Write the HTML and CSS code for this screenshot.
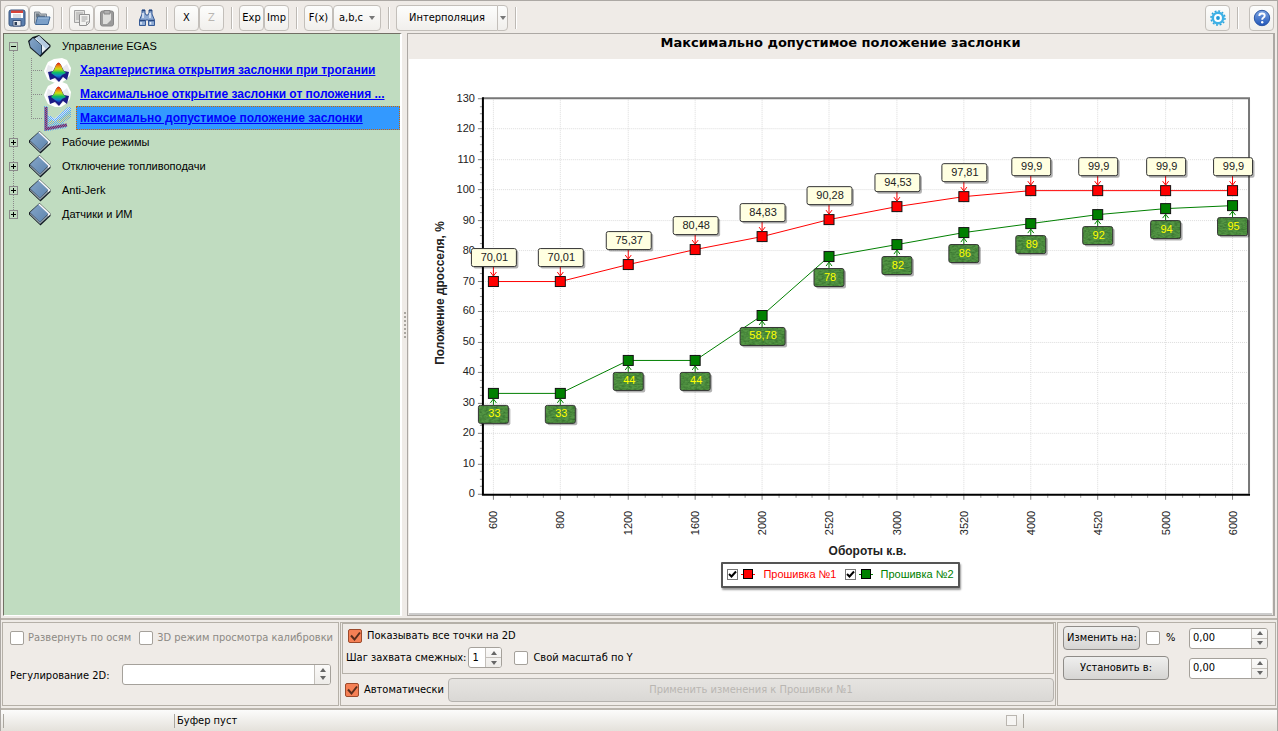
FILE: index.html
```html
<!DOCTYPE html>
<html lang="ru">
<head>
<meta charset="utf-8">
<title>Максимально допустимое положение заслонки</title>
<link rel="stylesheet" href="styles.css">
</head>
<body>
<svg class="defs" width="0" height="0" aria-hidden="true">
  <defs>
    <linearGradient id="cover" x1="0" y1="0" x2="1" y2="1"><stop offset="0" stop-color="#86a6c8"/><stop offset="1" stop-color="#5d84ae"/></linearGradient>
    <linearGradient id="help" x1="0" y1="0" x2="0" y2="1"><stop offset="0" stop-color="#7fa6e4"/><stop offset="1" stop-color="#1f55b8"/></linearGradient>
    <linearGradient id="peak" x1="0" y1="0" x2="0" y2="1"><stop offset="0" stop-color="#d81010"/><stop offset=".22" stop-color="#f09010"/><stop offset=".4" stop-color="#c8e010"/><stop offset=".6" stop-color="#10c060"/><stop offset=".8" stop-color="#1080d0"/><stop offset="1" stop-color="#1818a0"/></linearGradient>
    <pattern id="dither" width="2" height="2" patternUnits="userSpaceOnUse"><path d="M0 0h1v1H0zM1 1h1v1H1z" fill="#3399ff"/></pattern>
    <symbol id="book" viewBox="0 0 24 24">
      <path d="M11.500 1 22.500 11.500V14L12.500 23.500 1 12.500V10.500Z" fill="#101820"/>
      <path d="M2 12.500 12 22 21.500 13.500 20.500 12 12 20 2 11Z" fill="#8c9aa6"/>
      <path d="M11 2 20.500 11.500 12 20 2 10.500Z" fill="url(#cover)"/>
      <path d="M11 2 21.500 12 20 13.500" fill="none" stroke="#fff" stroke-width="1.600"/>
    </symbol>
    <symbol id="openbook" viewBox="0 0 24 24">
      <path d="M0 7 4.500 3 11 1 22.500 11V13L12.500 23 2 14Z" fill="#101820"/>
      <path d="M11 2 21.500 12 13 20 6 5Z" fill="#e8f0f6"/>
      <path d="M11 2 21.500 12 18 15 8 4Z" fill="#b4cbe0"/>
      <path d="M5 4 13 11V20L12 21.500 2.500 13 1.500 7.500Z" fill="url(#cover)"/>
      <path d="M6 4.500 13.500 11V20" fill="none" stroke="#29445f"/>
    </symbol>
    <symbol id="surface" viewBox="0 0 28 26">
      <path d="M10 1 18 0 23 2 25 6 27 10 26 17 23 21 17 25H11L4 22 2 18 0 13 2 8 4 4Z" fill="#fff"/>
      <path d="M4 7 9 9 7 20 2 14ZM23 6 18 10 20 20 26 13ZM8 20l6 4 6-4" fill="#e9e9ef"/>
      <path d="M4 14 9 13 12 7Q14.500 3 17 7L20 13 25 14 23 22 19 19 15 24 11 20 6 22Z" fill="#1b1b86"/>
      <path d="M7 15 10 12 12 7Q14.500 2 17 7L19 12 22 15 18 17 15 21 11 18Z" fill="url(#peak)"/>
    </symbol>
    <symbol id="curve" viewBox="0 0 28 26">
      <path d="M2 1V23L23 19" fill="none" stroke="#a82040" stroke-width="3"/>
      <path d="M5 18 12 13 16 16 26 9" fill="none" stroke="#f0e080" stroke-width="3"/>
      <path d="M5 11 11 14 26 2" fill="none" stroke="#d8e4f4" stroke-width="3"/>
      <path d="M0 0h4v10h3l4 3L24 1h3v10l-8 6 4 1v4L4 25H0Z" fill="url(#dither)" opacity=".75"/>
    </symbol>
  </defs>
</svg>
<div class="window">
  <header class="toolbar">
    <button class="tool" aria-label="Сохранить"><svg width="18" height="18" viewBox="0 0 18 18"><rect x="1" y="1" width="16" height="16" rx="2" fill="#5b7fae" stroke="#3a5680"/><path d="M3 2h12v7H3z" fill="#fff"/><path d="M3 1.500h12v2.500H3z" fill="#d84438"/><path d="M5 6h8M5 8h8" stroke="#b5bcc6"/><path d="M5 11.500h8V17H5z" fill="#e6e9ee" stroke="#38507a"/><path d="M6.500 13h2.500v3H6.500z" fill="#2b3c58"/></svg></button>
    <button class="tool" aria-label="Открыть"><svg width="18" height="18" viewBox="0 0 18 18"><path d="M1.500 14.500V3h5l1 2h6v3" fill="#b9bec4" stroke="#7e8790"/><path d="M3 4.500h3l1 2h5v2H3z" fill="#6c7883"/><path d="M4.500 8H17l-2 7.500H2.500Z" fill="#7ba0c9" stroke="#3f6796"/><path d="M5 9h11" stroke="#a9c3e0"/></svg></button>
    <span class="sep"></span>
    <button class="tool" aria-label="Копировать" disabled><svg width="18" height="18" viewBox="0 0 18 18"><path d="M1.500 1.500h10v12h-10z" fill="#e2e2e0" stroke="#a2a2a2"/><path d="M3 4h7M3 6h3M3 8h3M3 10h3" stroke="#a8a8a8"/><path d="M6.500 5.500h10v8l-3 3h-7z" fill="#f3f3f1" stroke="#909090"/><path d="M8.500 8h6M8.500 10h6M8.500 12h4M13.500 16v-3h3" stroke="#a2a2a2" fill="none"/></svg></button>
    <button class="tool" aria-label="Вставить" disabled><svg width="18" height="18" viewBox="0 0 18 18"><rect x="2.500" y="2" width="13" height="15" rx="2" fill="#9b9b9b" stroke="#888"/><path d="M5 4h8v11H5z" fill="#dededc"/><path d="M6 1.500h6V5H6z" fill="#b0b0b0" stroke="#888"/><path d="M13 11v4H9z" fill="#999"/></svg></button>
    <span class="sep"></span>
    <button class="tool flat" aria-label="Поиск"><svg width="18" height="18" viewBox="0 0 18 18"><path d="M4 1h3v3l1 2h2l1-2V1h3v4l2.500 6v5.500h-6V11H7.500v5.500h-6V11L4 5Z" fill="#8eaad3" stroke="#365a96"/><path d="M4 1.500h3M11 1.500h3M2 11.500h5M11 11.500h5" stroke="#27477f" stroke-width="1.500"/><path d="M3 13v2.500M12.500 13v2.500M5 4v5M12 4v5" stroke="#e4edf9" stroke-width="1.500"/></svg></button>
    <span class="sep"></span>
    <button class="tool">X</button><button class="tool" disabled>Z</button>
    <span class="sep"></span>
    <button class="tool">Exp</button><button class="tool">Imp</button>
    <span class="sep"></span>
    <button class="tool fx">F(x)</button><button class="tool abc">a,b,c<i class="caret"></i></button>
    <span class="sep"></span>
    <span class="split"><button class="tool main">Интерполяция</button><button class="tool drop" aria-label="Выбор интерполяции"><i class="caret"></i></button></span>
    <span class="sep"></span>
    <span class="spring"></span>
    <button class="tool" aria-label="Настройки"><svg width="18" height="18" viewBox="0 0 18 18"><circle cx="9" cy="9" r="7" fill="none" stroke="#2ba3dc" stroke-width="1.500" stroke-dasharray="1.900 1.765"/><circle cx="9" cy="9" r="5.200" fill="#fff" stroke="#3eb1e6" stroke-width="2.500"/><circle cx="9" cy="9" r="1.900" fill="#2098d8"/></svg></button>
    <span class="sep far"></span>
    <button class="tool" aria-label="Справка"><svg width="18" height="18" viewBox="0 0 18 18"><circle cx="9" cy="9" r="7.700" fill="url(#help)" stroke="#2a56a5"/><path d="M6.300 7Q6.300 4.500 9 4.500T11.700 6.800Q11.700 8 10.300 8.800 9.200 9.400 9.200 10.700" fill="none" stroke="#fff" stroke-width="1.900"/><circle cx="9.200" cy="13.200" r="1.200" fill="#fff"/></svg></button>
  </header>

  <main class="work">
    <nav class="tree">
      <ul class="roots">
        <li>
          <div class="row"><button class="toggle" aria-label="Свернуть"><svg width="9" height="9"><path d="M2 4.500h5" stroke="#000"/></svg></button><svg class="icon"><use href="#openbook"/></svg><span>Управление EGAS</span></div>
          <ul class="leaves">
            <li><svg class="pic"><use href="#surface"/></svg><a href="#">Характеристика открытия заслонки при трогании</a></li>
            <li><svg class="pic"><use href="#surface"/></svg><a href="#">Максимальное открытие заслонки от положения ...</a></li>
            <li><svg class="pic"><use href="#curve"/></svg><a href="#" class="selected">Максимально допустимое положение заслонки</a></li>
          </ul>
        </li>
        <li><div class="row"><button class="toggle" aria-label="Развернуть"><svg width="9" height="9"><path d="M2 4.500h5M4.500 2v5" stroke="#000"/></svg></button><svg class="icon"><use href="#book"/></svg><span>Рабочие режимы</span></div></li>
        <li><div class="row"><button class="toggle" aria-label="Развернуть"><svg width="9" height="9"><path d="M2 4.500h5M4.500 2v5" stroke="#000"/></svg></button><svg class="icon"><use href="#book"/></svg><span>Отключение топливоподачи</span></div></li>
        <li><div class="row"><button class="toggle" aria-label="Развернуть"><svg width="9" height="9"><path d="M2 4.500h5M4.500 2v5" stroke="#000"/></svg></button><svg class="icon"><use href="#book"/></svg><span>Anti-Jerk</span></div></li>
        <li><div class="row"><button class="toggle" aria-label="Развернуть"><svg width="9" height="9"><path d="M2 4.500h5M4.500 2v5" stroke="#000"/></svg></button><svg class="icon"><use href="#book"/></svg><span>Датчики и ИМ</span></div></li>
      </ul>
    </nav>
    <div class="splitter"><span></span></div>
    <section class="view">
      <h1>Максимально допустимое положение заслонки</h1>
      <div class="chartbox">
        <svg id="chart" class="chart" viewBox="0 0 864 502" role="img" aria-label="Положение дросселя, %"></svg>
        <div class="legend">
          <label class="first"><input type="checkbox" checked><svg width="14" height="12"><path d="M0 6.500h14" stroke="#f00"/><rect x="2.500" y="1.500" width="9" height="9" fill="#f00" stroke="#000"/></svg>Прошивка №1</label>
          <label class="second"><input type="checkbox" checked><svg width="14" height="12"><path d="M0 6.500h14" stroke="#008000"/><rect x="2.500" y="1.500" width="9" height="9" fill="#008000" stroke="#000"/></svg>Прошивка №2</label>
        </div>
      </div>
    </section>
  </main>

  <section class="controls">
    <div class="panel axes">
      <div class="line">
        <label class="check off"><input type="checkbox" disabled>Развернуть по осям</label>
        <label class="check off"><input type="checkbox" disabled>3D режим просмотра калибровки</label>
      </div>
      <div class="line adjust">
        <label for="adj">Регулирование 2D:</label>
        <span class="spin wide"><input id="adj" type="text"><span class="arrows"><button aria-label="Больше"></button><button aria-label="Меньше"></button></span></span>
      </div>
    </div>
    <div class="panel points">
      <div class="inner">
        <label class="check"><input type="checkbox" checked>Показывать все точки на 2D</label>
        <div class="line">
          <label for="step">Шаг захвата смежных:</label>
          <span class="spin small"><input id="step" type="text" value="1"><span class="arrows"><button aria-label="Больше"></button><button aria-label="Меньше"></button></span></span>
          <label class="check scale"><input type="checkbox">Свой масштаб по Y</label>
        </div>
      </div>
      <div class="line apply">
        <label class="check"><input type="checkbox" checked>Автоматически</label>
        <button class="push" disabled>Применить изменения к Прошивки №1</button>
      </div>
    </div>
    <div class="panel edit">
      <div class="line">
        <button class="push change">Изменить на:</button>
        <label class="check percent"><input type="checkbox">%</label>
        <span class="spin num"><input type="text" value="0,00" aria-label="Изменить на"><span class="arrows"><button aria-label="Больше"></button><button aria-label="Меньше"></button></span></span>
      </div>
      <div class="line">
        <button class="push set">Установить в:</button>
        <span class="spin num"><input type="text" value="0,00" aria-label="Установить в"><span class="arrows"><button aria-label="Больше"></button><button aria-label="Меньше"></button></span></span>
      </div>
    </div>
  </section>

  <footer class="status">
    <span class="cell blank"></span>
    <span class="cell text">Буфер пуст</span>
    <span class="box"></span>
    <span class="cell tail"></span>
  </footer>
</div>
<script src="chart.js"></script>
</body>
</html>
```

FILE: styles.css
```css
* { box-sizing: border-box; }
body {
  margin: 0;
  background: #efebe7;
  color: #000;
  font: 11px/14px "DejaVu Sans Condensed", "DejaVu Sans", sans-serif;
  white-space: nowrap;
}
button, input { font: inherit; color: inherit; }
ul { list-style: none; margin: 0; padding: 0; }
.defs { position: absolute; }

.window {
  display: flex;
  flex-direction: column;
  height: 100vh;
  min-height: 600px;
  border: 1px solid #aca8a4;
  border-bottom: 0;
  padding-top: 1px;
}

/* toolbar */
.toolbar {
  display: flex;
  align-items: center;
  height: 31px;
  padding: 0 3px;
  flex: none;
}
.tool {
  display: flex;
  align-items: center;
  justify-content: center;
  flex: none;
  width: 25px;
  height: 26px;
  padding: 0;
  border: 1px solid #c3bfba;
  border-radius: 4px;
  background: linear-gradient(#fdfdfc, #f1efec);
}
.tool:disabled { color: #b9b6b2; }
.tool.flat { border-color: transparent; background: none; }
.tool.fx { width: 29px; }
.tool.abc { width: 48px; gap: 6px; }
.split { display: flex; }
.split .main { width: 101px; border-radius: 4px 0 0 4px; border-right: 0; }
.split .drop { width: 11px; border-radius: 0 4px 4px 0; }
.caret { border: 3px solid transparent; border-top: 4px solid #777; border-bottom: 0; }
.sep {
  width: 2px;
  height: 22px;
  margin: 0 6px 0 7px;
  border-left: 1px solid #bdb9b4;
  border-right: 1px solid #fff;
}
.sep.far { margin-right: 10px; }
.spring { flex: 1; }

/* tree */
.work { display: flex; flex: 1; min-height: 0; padding: 0 2px 2px 2px; }
.tree {
  flex: none;
  width: 399px;
  background: #c0dcc0;
  border: 1px solid #716f64;
  border-right: 2px solid #fff;
  border-bottom: 1px solid #fff;
  font: 11px/24px "Liberation Sans", Arial, sans-serif;
  overflow: hidden;
}
.roots > li { position: relative; }
.roots > li:not(:last-child)::before {
  content: "";
  position: absolute;
  left: 9px;
  top: 17px;
  bottom: -8px;
  border-left: 1px dotted #8a8a8a;
}
.row { display: flex; align-items: center; height: 24px; padding-left: 5px; }
.toggle {
  display: block;
  width: 9px;
  height: 9px;
  padding: 0;
  border: 0;
  outline: 1px solid #8a8a8a;
  outline-offset: -1px;
  background: #c0dcc0;
}
.toggle svg { display: block; }
.row .icon { width: 24px; height: 24px; margin: 0 10px; }
.leaves > li { position: relative; display: flex; height: 24px; padding-left: 40px; }
.leaves > li::before {
  content: "";
  position: absolute;
  left: 27px;
  top: -12px;
  width: 10px;
  height: 24px;
  border-left: 1px dotted #8a8a8a;
  border-bottom: 1px dotted #8a8a8a;
}
.leaves > li:first-child::before { top: 0; height: 12px; }
.pic { width: 28px; height: 26px; margin-right: 4px; flex: none; }
.leaves a {
  flex: 1;
  padding-left: 3px;
  border: 1px solid transparent;
  color: #00f;
  font-weight: bold;
  font-size: 12px;
  line-height: 22px;
}
.leaves .selected { background: #3399ff; border: 1px dotted #cc6600; }
.splitter { display: flex; align-items: center; justify-content: center; width: 5px; }
.splitter span { height: 26px; border-left: 2px dotted #aaa6a0; }

/* chart */
.view {
  display: flex;
  flex-direction: column;
  flex: 1;
  min-width: 0;
  border: 1px solid #aca8a4;
  border-width: 1px 2px 1px 1px;
}
h1 {
  margin: 0;
  padding: 0 0 8px;
  text-align: center;
  font: bold 13px/17px "DejaVu Sans", Verdana, sans-serif;
}
.chartbox {
  flex: 1;
  min-height: 0;
  display: flex;
  flex-direction: column;
  align-items: center;
  margin: 0 1px;
  background: #fff;
  border-bottom: 2px solid #ccc;
}
.chart {
  display: block;
  width: 100%;
  flex: 0 1 502px;
  min-height: 0;
  font-family: "Liberation Sans", Arial, sans-serif;
}
.legend {
  display: flex;
  gap: 8px;
  height: 26px;
  flex: none;
  margin-top: 1px;
  padding: 0 4px 2px 4px;
  align-items: center;
  border: 2px solid #555;
  border-radius: 1px;
  background: #fff;
  box-shadow: 1px 2px 2px #999;
  font: 11px/14px "Liberation Sans", Arial, sans-serif;
}
.legend label { display: flex; align-items: center; }
.legend svg { margin: 0 8px 0 3px; }
.legend input {
  appearance: none;
  width: 11px;
  height: 11px;
  margin: 0;
  border: 1px solid #777;
  background: #fff url("data:image/svg+xml,%3Csvg xmlns='http://www.w3.org/2000/svg' viewBox='0 0 9 9'%3E%3Cpath d='M1 4l2.500 2.500L8 1.500' fill='none' stroke='%23000' stroke-width='2'/%3E%3C/svg%3E");
}
.first { color: #f00; }
.second { color: #008000; }

/* control panels */
.controls {
  display: grid;
  grid-template-columns: 337px 1fr 219px;
  gap: 1px;
  flex: none;
  height: 92px;
  padding: 2px 1px;
  border-top: 2px solid #bab5ad;
  border-bottom: 2px solid #bab5ad;
}
.panel { border: 1px solid #b5b0a8; }
.line { display: flex; align-items: center; }
.check { display: flex; align-items: center; gap: 5px; }
.check input {
  appearance: none;
  width: 14px;
  height: 14px;
  margin: 0;
  border: 1px solid #a5a19b;
  border-radius: 2px;
  background: #fff;
}
.check input:checked {
  border-color: #9c4a2c;
  background: #f58055 url("data:image/svg+xml,%3Csvg xmlns='http://www.w3.org/2000/svg' viewBox='0 0 12 12'%3E%3Cpath d='M2 5.500l3.500 4L11 2.500' fill='none' stroke='%235a2d1c' stroke-width='2'/%3E%3C/svg%3E");
}
.off { color: #8c8984; }
.axes { padding: 6px 7px; }
.axes .line { gap: 8px; height: 18px; }
.axes .check { gap: 4px; }
.axes .adjust { margin-top: 16px; height: 22px; gap: 12px; }
.adjust label { padding-top: 3px; }
.spin {
  display: flex;
  height: 21px;
  border: 1px solid #a5a19b;
  border-radius: 3px;
  background: #fff;
  overflow: hidden;
}
.spin input { flex: 1; min-width: 0; padding: 0 3px; border: 0; background: none; }
.arrows {
  display: flex;
  flex-direction: column;
  width: 16px;
  border-left: 1px solid #c3bfba;
  background: linear-gradient(#fbfaf9, #eeece9);
}
.arrows button { flex: 1; display: flex; align-items: center; justify-content: center; padding: 0; border: 0; background: none; }
.arrows button + button { border-top: 1px solid #c3bfba; }
.arrows button::before { content: ""; border: 3px solid transparent; border-bottom: 4px solid #666; border-top: 0; }
.arrows button + button::before { border-bottom: 0; border-top: 4px solid #666; }
.wide { flex: 1; }
.wide .arrows { padding: 2px 0; }
.wide .arrows button + button { border-top: 0; }
.points { display: flex; flex-direction: column; gap: 4px; padding: 0 1px; }
.inner { height: 51px; padding: 5px 5px 0; border: 1px solid #b5b0a8; }
.inner .line { margin-top: 4px; margin-left: -2px; }
.small { width: 34px; margin: 0 12px 0 2px; }
.apply { gap: 4px; padding-left: 3px; }
.apply .push { flex: 1; }
.push {
  height: 24px;
  padding: 0 3px;
  border: 1px solid #8f8c88;
  border-radius: 4px;
  background: linear-gradient(#efefee, #d6d5d3);
}
.push:disabled { border-color: #b5b2ae; color: #b9b6b2; background: linear-gradient(#e6e4e1, #dad8d5); }
.edit { padding: 3px 7px 0 5px; }
.edit .line { height: 24px; margin-bottom: 6px; }
.change { width: 77px; }
.set { width: 106px; }
.percent { margin-left: 6px; gap: 6px; }
.num { width: 79px; margin-left: auto; }

/* status bar */
.status {
  display: flex;
  align-items: center;
  flex: none;
  height: 21px;
  background: linear-gradient(#fcfcfb, #e4e1db);
}
.cell { height: 14px; border-left: 1px solid #aaa69e; }
.blank { width: 171px; margin-left: 2px; }
.text { flex: 1; padding-left: 2px; }
.box { width: 11px; height: 11px; border: 1px solid #bab6b0; background: #f6f5f3; }
.tail { width: 254px; margin-left: 6px; }
```

FILE: chart.js
```js
(() => {
  const speeds = [600, 800, 1200, 1600, 2000, 2520, 3000, 3520, 4000, 4520, 5000, 6000];
  const first = [70.01, 70.01, 75.37, 80.48, 84.83, 90.28, 94.53, 97.81, 99.9, 99.9, 99.9, 99.9];
  const second = [33, 33, 44, 44, 58.78, 78, 82, 86, 89, 92, 94, 95];

  const left = 74, right = 841, top = 39, bottom = 435;
  const x = i => Math.round(84 + i * 740 / 11);
  const y = v => Math.round(bottom - v * (bottom - top) / 130);
  const out = [];
  const line = (x1, y1, x2, y2, color, extra = '') =>
    out.push(`<line x1="${x1}" y1="${y1}" x2="${x2}" y2="${y2}" stroke="${color}" ${extra}/>`);
  const text = (tx, ty, s, extra) => out.push(`<text x="${tx}" y="${ty}" ${extra}>${s}</text>`);

  out.push(`<defs>
    <filter id="grain" x="0" y="0" width="1" height="1" color-interpolation-filters="sRGB">
      <feTurbulence type="fractalNoise" baseFrequency="0.3 0.6" numOctaves="2"/>
      <feColorMatrix values="0 0 0 0 .1  0 0 0 0 .3  0 0 0 0 .1  1 0 0 0 -.35"/>
      <feComposite in2="SourceGraphic" operator="in" result="n"/>
      <feMerge><feMergeNode in="SourceGraphic"/><feMergeNode in="n"/></feMerge>
    </filter>
  </defs>`);

  for (let v = 0; v <= 130; v += 10) {
    const gy = y(v) + 0.5;
    if (v > 0 && v < 130) line(left, gy, right, gy, '#dcdcdc', 'stroke-dasharray="1 1"');
    line(69, gy, left, gy, '#808080');
    text(66, gy + 3, v, 'text-anchor="end" font-size="11" fill="#222"');
    if (v < 130) for (let k = 1; k < 4; k++) {
      const my = y(v + k * 2.5) + 0.5;
      line(71, my, left, my, '#999');
    }
  }
  speeds.forEach((s, i) => {
    const gx = x(i) + 0.5;
    line(gx, top, gx, bottom, '#dcdcdc', 'stroke-dasharray="1 1"');
    line(gx, bottom, gx, bottom + 6, '#808080');
    if (i < 11) for (let k = 1; k < 4; k++) {
      const mx = Math.round(x(i) + k * 740 / 44) + 0.5;
      line(mx, bottom, mx, bottom + 4, '#999');
    }
    text(gx + 4, 452, s, `text-anchor="end" font-size="11" fill="#222" transform="rotate(-90 ${gx + 4} 452)"`);
  });
  out.push(`<path d="M${left} ${top}H${right}V${bottom}" fill="none" stroke="#777" stroke-width="2"/>`);
  out.push(`<path d="M${left} ${top - 1}V${bottom + 1}H${right + 1}" fill="none" stroke="#000" stroke-width="2"/>`);
  text(459, 496, 'Обороты к.в.', 'text-anchor="middle" font-size="12" font-weight="bold" fill="#222"');
  text(35, 234, 'Положение дросселя, %', 'text-anchor="middle" font-size="12" font-weight="bold" fill="#222" transform="rotate(-90 35 234)"');

  const series = (values, color, below) => {
    out.push(`<polyline points="${values.map((v, i) => (x(i) + 0.5) + ',' + (y(v) + 0.5)).join(' ')}" fill="none" stroke="${color}"/>`);
    values.forEach((v, i) => {
      out.push(`<rect x="${x(i) - 4.5}" y="${y(v) - 4.5}" width="10" height="10" fill="${color}" stroke="#111"/>`);
    });
    values.forEach((v, i) => {
      const px = x(i) + 0.5, py = y(v);
      const label = String(v).replace('.', ',');
      const w = label.length > 4 ? 45 : label.length > 2 ? 39 : 30;
      const bx = Math.floor(px - w / 2) + 0.5;
      const by = below ? py + 12.5 : py - 32.5;
      if (below) out.push(`<path d="M${px} ${py + 12}V${py + 6}M${px - 3} ${py + 10}L${px} ${py + 6}L${px + 3} ${py + 10}" fill="none" stroke="${color}"/>`);
      else out.push(`<path d="M${px} ${py - 14}V${py - 5}M${px - 3} ${py - 9}L${px} ${py - 5}L${px + 3} ${py - 9}" fill="none" stroke="${color}"/>`);
      out.push(`<rect x="${bx + 2}" y="${by + 2}" width="${w}" height="18" rx="2" fill="#000" fill-opacity=".3"/>`);
      out.push(`<rect x="${bx}" y="${by}" width="${w}" height="18" rx="2" fill="${below ? '#549644' : '#ffffe1'}" ${below ? 'filter="url(#grain)"' : ''}/>`);
      out.push(`<rect x="${bx}" y="${by}" width="${w}" height="18" rx="2" fill="none" stroke="#333"/>`);
      text(px + 1, by + 12, label, `text-anchor="middle" font-size="11" fill="${below ? '#ff0' : '#222'}"`);
    });
  };
  series(second, '#008000', true);
  series(first, '#ff0000', false);

  document.getElementById('chart').innerHTML = out.join('');
})();
```
